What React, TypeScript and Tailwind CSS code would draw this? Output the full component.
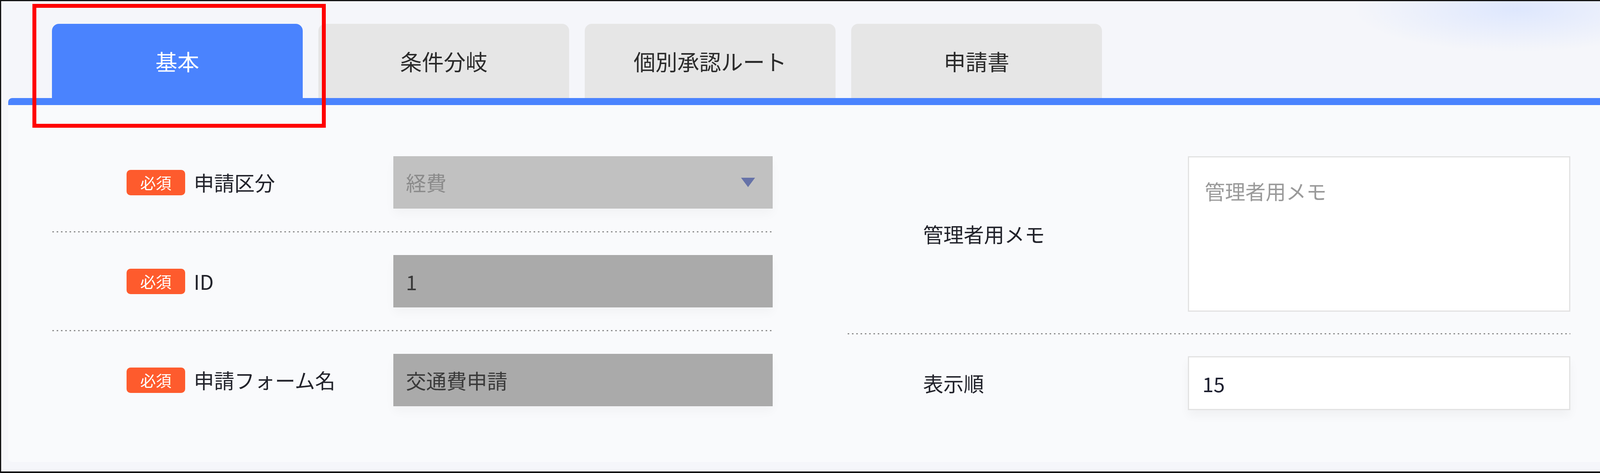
import { useState } from "react";

const tabs = ["基本", "条件分岐", "個別承認ルート", "申請書"];

function Badge() {
  return (
    <span className="flex h-[65px] w-[150px] shrink-0 items-center justify-center rounded-[10px] bg-[#fe5b2d] text-[40px] leading-none text-white">
      必須
    </span>
  );
}

function Dotted() {
  return (
    <div className="h-[3px] w-full bg-[repeating-linear-gradient(90deg,#8d8d8d_0px,#8d8d8d_4px,transparent_4px,transparent_11px)]" />
  );
}

function LeftRow({
  label,
  children,
  last,
}: {
  label: string;
  children: React.ReactNode;
  last?: boolean;
}) {
  return (
    <>
      <div className="flex py-[58px]">
        <div className="flex w-[873px] items-center gap-x-[22px] pl-[190px]">
          <Badge />
          <span className="text-[52px] text-[#22232b]">{label}</span>
        </div>
        {children}
      </div>
      {!last && <Dotted />}
    </>
  );
}

function App() {
  const [active, setActive] = useState<number>(0);
  const [order, setOrder] = useState<string>("15");

  return (
    <div className="relative flex h-[1211px] w-[4182px] flex-col overflow-hidden border-[3px] border-r-4 border-b-4 border-[#141414] bg-[#f5f6fa] bg-[radial-gradient(ellipse_420px_110px_at_3880px_20px,rgba(214,226,255,0.75),transparent)] pt-[58px] pl-[18px] pr-[45px] font-['Noto_Sans_CJK_JP','Noto_Sans',sans-serif]">
      {/* tabs */}
      <div className="flex gap-x-[40px] pl-[112px]">
        {tabs.map((t, i) => (
          <button
            key={t}
            onClick={() => setActive(i)}
            className={
              i === active
                ? "flex h-[190px] w-[642px] items-center justify-center rounded-t-[18px] bg-[#4a83fe] text-[56px] text-white"
                : "flex h-[190px] w-[642px] items-center justify-center rounded-t-[18px] bg-[#e6e6e6] text-[56px] text-[#2b2b2b]"
            }
          >
            {t}
          </button>
        ))}
      </div>
      <div className="h-[18px] shrink-0 rounded-t-[10px] bg-[#4a83fe]" />

      {/* panel */}
      <div className="grid h-[914px] shrink-0 grid-cols-[1844px_1850px] items-start gap-x-[192px] rounded-b-[10px] bg-[#f9fafc] px-[113px] pt-[73px]">
        <div className="flex flex-col">
          <LeftRow label="申請区分">
            <div className="flex h-[134px] w-[971px] items-center justify-between border border-[#bdbdbd] bg-[#c1c1c1] pl-[31px] pr-[44px] shadow-[0_14px_24px_rgba(0,0,0,0.03)]">
              <span className="text-[52px] text-[#8b8b8b]">経費</span>
              <svg width="36" height="24" viewBox="0 0 36 24">
                <path d="M0 0 H36 L18 24 Z" fill="#6672a8" />
              </svg>
            </div>
          </LeftRow>
          <LeftRow label="ID">
            <input
              readOnly
              value="1"
              className="h-[134px] w-[971px] border border-[#a4a4a4] bg-[#aaaaaa] pl-[31px] text-[52px] text-[#3a3a3a] outline-none shadow-[0_14px_24px_rgba(0,0,0,0.03)]"
            />
          </LeftRow>
          <LeftRow label="申請フォーム名" last>
            <input
              readOnly
              value="交通費申請"
              className="h-[134px] w-[971px] border border-[#a4a4a4] bg-[#aaaaaa] pl-[31px] text-[52px] text-[#3a3a3a] outline-none shadow-[0_14px_24px_rgba(0,0,0,0.03)]"
            />
          </LeftRow>
        </div>

        <div className="flex flex-col">
          <div className="flex pt-[58px] pb-[55px]">
            <div className="flex w-[871px] items-center pl-[193px] text-[52px] text-[#22232b]">
              管理者用メモ
            </div>
            <textarea
              placeholder="管理者用メモ"
              className="h-[398px] w-[979px] resize-none border-[3px] border-[#e2e2e2] bg-white px-[40px] pt-[50px] text-[52px] leading-[1.4] text-[#333] outline-none placeholder:text-[#9a9a9a]"
            />
          </div>
          <Dotted />
          <div className="flex pt-[56px] pb-[56px]">
            <div className="flex w-[871px] items-center pl-[193px] text-[52px] text-[#22232b]">
              表示順
            </div>
            <input
              value={order}
              onChange={(e) => setOrder(e.target.value)}
              className="h-[138px] w-[979px] border-[3px] border-[#e2e2e2] bg-white px-[34px] text-[52px] text-[#1e2030] outline-none shadow-[0_14px_24px_rgba(0,0,0,0.04)]"
            />
          </div>
        </div>
      </div>

      {/* annotation frame */}
      <div className="absolute left-[80px] top-[7px] h-[317px] w-[751px] border-[10px] border-[#ff0000]" />
    </div>
  );
}

export default App;
